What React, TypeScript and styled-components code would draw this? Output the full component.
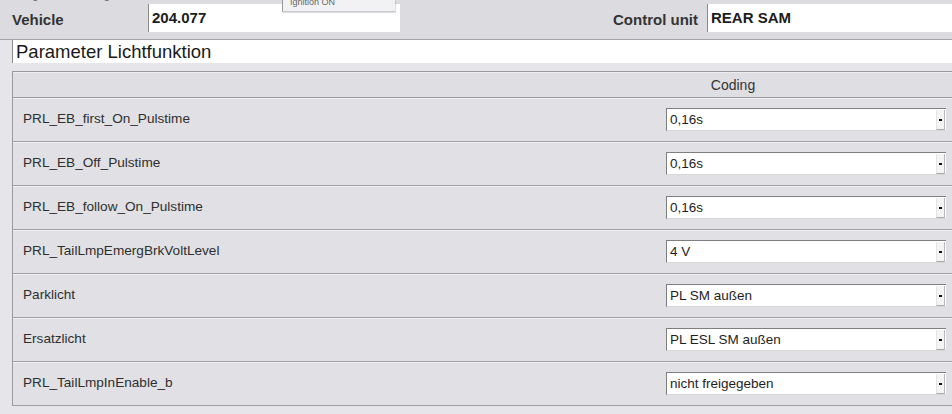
import React from 'react'
import styled, { createGlobalStyle } from 'styled-components'

const GlobalStyle = createGlobalStyle`
  html, body {
    margin: 0;
    padding: 0;
    background: #ffffff;
    font-family: "Liberation Sans", Arial, sans-serif;
    color: #222;
  }
`;

const Screen = styled.div`
  width: 952px;
  height: 414px;
  overflow: hidden;
  position: relative;
  background: #e6e6ea;
`;

const TopBar = styled.div`
  display: flex;
  flex-direction: column;
  background: #dcdce0;
  border-bottom: 1px solid #a4a4a8;
  height: 40px;
  box-sizing: border-box;
`;

const TopStrip = styled.div`
  height: 4px;
  overflow: hidden;
  display: flex;
  align-items: flex-end;
  padding-left: 14px;
  gap: 46px;
  font-size: 12px;
  line-height: 20px;
  color: #666;
  white-space: nowrap;
`;

const InfoRow = styled.div`
  display: flex;
  align-items: stretch;
  height: 28px;
  padding-left: 12px;
`;

const InfoLabel = styled.div<{ $width?: number; $right?: boolean }>`
  display: flex;
  align-items: center;
  justify-content: ${p => (p.$right ? 'flex-end' : 'flex-start')};
  width: ${p => (p.$width ? `${p.$width}px` : 'auto')};
  padding-top: 2px;
  padding-right: ${p => (p.$right ? '9px' : '0')};
  font-size: 15px;
  font-weight: bold;
  color: #333;
`;

const InfoField = styled.div<{ $width: number }>`
  width: ${p => p.$width}px;
  box-sizing: border-box;
  background: #fff;
  border-left: 1px solid #8a8a8a;
  display: flex;
  align-items: center;
  padding: 0 0 2px 3px;
  font-size: 15px;
  font-weight: bold;
  color: #1c1c1c;
`;

const Spacer = styled.div`
  flex: 1;
`;

const Tooltip = styled.div`
  position: absolute;
  top: 0;
  left: 282px;
  width: 113px;
  height: 12px;
  box-sizing: border-box;
  background: #f2f2f4;
  border-left: 1px solid #9a9a9a;
  border-bottom: 1px solid #c8c8cc;
  box-shadow: 1px 1px 1px rgba(0, 0, 0, 0.12);
  overflow: hidden;
  display: flex;
  align-items: flex-end;
  padding-left: 7px;
  font-size: 9px;
  line-height: 18px;
  color: #666;
  white-space: nowrap;
`;

const SectionTitle = styled.div`
  margin: 0 0 8px 12px;
  height: 23px;
  background: #fff;
  border-left: 1px solid #8c8c8c;
  display: flex;
  align-items: center;
  padding-left: 3px;
  font-size: 18.5px;
  color: #1a1a1a;
`;

const Table = styled.div`
  margin-left: 12px;
  border-left: 1px solid #9a9a9e;
  border-top: 1px solid #9a9a9e;
  background: #e1e1e5;
`;

const HeadRow = styled.div`
  display: grid;
  grid-template-columns: 501px 1fr;
  height: 25px;
  border-bottom: 1px solid #9c9ca0;
  box-shadow: inset 0 1px 0 #ececf0;
  background: #dfdfe3;
`;

const HeadCell = styled.div`
  display: flex;
  align-items: center;
  justify-content: center;
  font-size: 14px;
  color: #333;
`;

const Row = styled.div`
  display: grid;
  grid-template-columns: 501px 1fr;
  height: 44px;
  box-sizing: border-box;
  border-bottom: 1px solid #a0a0a4;
  box-shadow: inset 0 1px 0 #f2f2f5;
`;

const RowLabel = styled.div`
  display: flex;
  align-items: center;
  padding-left: 10px;
  padding-bottom: 3px;
  font-size: 13.6px;
  color: #2e2e2e;
`;

const RowValue = styled.div`
  display: flex;
  align-items: center;
  justify-content: flex-end;
  padding-right: 6px;
`;

const Select = styled.div`
  display: flex;
  width: 280px;
  height: 23px;
  box-sizing: border-box;
  background: #fff;
  border-top: 1px solid #7e7e7e;
  border-left: 1px solid #7e7e7e;
  border-bottom: 1px solid #d8d8d8;
`;

const SelectText = styled.div`
  flex: 1;
  display: flex;
  align-items: center;
  padding-left: 3px;
  font-size: 13.5px;
  color: #1e1e1e;
`;

const SelectArrow = styled.div`
  width: 9px;
  margin: 1px 1px 0 0;
  box-sizing: border-box;
  border-left: 1px solid #e4e4e4;
  border-right: 1px solid #b8b8b8;
  border-bottom: 1px solid #a8a8a8;
  background: #f4f4f4;
  display: flex;
  align-items: center;
  justify-content: center;

  &::after {
    content: '';
    width: 3px;
    height: 2px;
    background: #111;
  }
`;

const rows = [
  { name: 'PRL_EB_first_On_Pulstime', value: '0,16s' },
  { name: 'PRL_EB_Off_Pulstime', value: '0,16s' },
  { name: 'PRL_EB_follow_On_Pulstime', value: '0,16s' },
  { name: 'PRL_TailLmpEmergBrkVoltLevel', value: '4 V' },
  { name: 'Parklicht', value: 'PL SM außen' },
  { name: 'Ersatzlicht', value: 'PL ESL SM außen' },
  { name: 'PRL_TailLmpInEnable_b', value: 'nicht freigegeben' },
];

export default function App() {
  return (
    <>
      <GlobalStyle />
      <Screen>
        <TopBar>
          <TopStrip>
            <span>Diagnose Steuergerät</span>
            <span>Lichtfunktion</span>
            <span>Codierung</span>
          </TopStrip>
          <InfoRow>
            <InfoLabel $width={136}>Vehicle</InfoLabel>
            <InfoField $width={252}>204.077</InfoField>
            <Spacer />
            <InfoLabel $right>Control unit</InfoLabel>
            <InfoField $width={245}>REAR SAM</InfoField>
          </InfoRow>
        </TopBar>
        <Tooltip>Ignition ON</Tooltip>
        <SectionTitle>Parameter Lichtfunktion</SectionTitle>
        <Table>
          <HeadRow>
            <HeadCell />
            <HeadCell>Coding</HeadCell>
          </HeadRow>
          {rows.map(r => (
            <Row key={r.name}>
              <RowLabel>{r.name}</RowLabel>
              <RowValue>
                <Select>
                  <SelectText>{r.value}</SelectText>
                  <SelectArrow />
                </Select>
              </RowValue>
            </Row>
          ))}
        </Table>
      </Screen>
    </>
  )
}
